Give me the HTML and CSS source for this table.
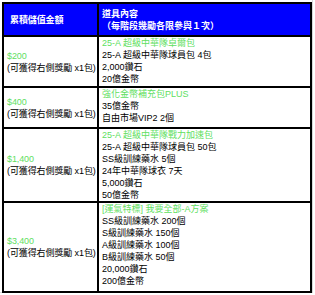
FILE: index.html
```html
<!DOCTYPE html>
<html lang="zh-Hant">
  <head>
    <meta charset="UTF-8" />
    <meta name="viewport" content="width=device-width, initial-scale=1.0" />
    <title>累積儲值</title>
    <link rel="stylesheet" href="styles.css">
  </head>
  <body>
    <div class="sheet">
      <table class="reward">
        <tr class="head">
          <th class="amount">累積儲值金額</th>
          <th class="items">道具內容<br />（每階段幾勵各限參與１次）</th>
        </tr>
        <tr class="r1">
          <td class="amount"><span class="green">$200</span><br />(可獲得右側獎勵 x1包)</td>
          <td class="items">
            <span class="green">25-A 超級中華隊卓爾包</span><br />
            25-A 超級中華隊球員包 4包<br />
            2,000鑽石<br />
            20億金幣
          </td>
        </tr>
        <tr class="r2">
          <td class="amount"><span class="green">$400</span><br />(可獲得右側獎勵 x1包)</td>
          <td class="items">
            <span class="green">強化金幣補充包PLUS</span><br />
            35億金幣<br />
            自由市場VIP2 2個
          </td>
        </tr>
        <tr class="r3">
          <td class="amount"><span class="green">$1,400</span><br />(可獲得右側獎勵 x1包)</td>
          <td class="items">
            <span class="green">25-A 超級中華隊戰力加速包</span><br />
            25-A 超級中華隊球員包 50包<br />
            SS級訓練藥水 5個<br />
            24年中華隊球衣 7天<br />
            5,000鑽石<br />
            50億金幣
          </td>
        </tr>
        <tr class="r4">
          <td class="amount"><span class="green">$3,400</span><br />(可獲得右側獎勵 x1包)</td>
          <td class="items">
            <span class="green">[運氣特標] 我要全部-A方案</span><br />
            SS級訓練藥水 200個<br />
            S級訓練藥水 150個<br />
            A級訓練藥水 100個<br />
            B級訓練藥水 50個<br />
            20,000鑽石<br />
            200億金幣
          </td>
        </tr>
      </table>
    </div>
  </body>
</html>
```

FILE: styles.css
```css
body {
  margin: 0;
  background-color: #ffffff;
  font-family: "Liberation Sans", "Noto Sans CJK TC", sans-serif;
}

.sheet {
  width: 313px;
  height: 293px;
  border-right: 1px solid #d8d8d8;
  border-bottom: 1px solid #d8d8d8;
  padding: 2px 0 0 2px;
  box-sizing: border-box;
}

.reward {
  border-collapse: collapse;
  width: 310px;
  font-size: 9px;
  line-height: 12px;
  color: #000000;
  white-space: nowrap;
}

.reward th,
.reward td {
  border: 2px solid #000000;
  padding: 0 1px 0 3px;
  text-align: left;
}

.head th {
  background-color: #0000ff;
  color: #ffffff;
  font-weight: bold;
  font-size: 9px;
  height: 31px;
  vertical-align: middle;
}

.head th.amount {
  padding-left: 6px;
}

.amount {
  width: 86px;
  vertical-align: middle;
  letter-spacing: -0.1px;
}

.items {
  vertical-align: top;
}

.green {
  color: #5fe05f;
}

.r1 td {
  height: 49px;
}

.r2 td {
  height: 39px;
}

.r3 td {
  height: 72px;
}

.r4 td {
  height: 88px;
}
```
